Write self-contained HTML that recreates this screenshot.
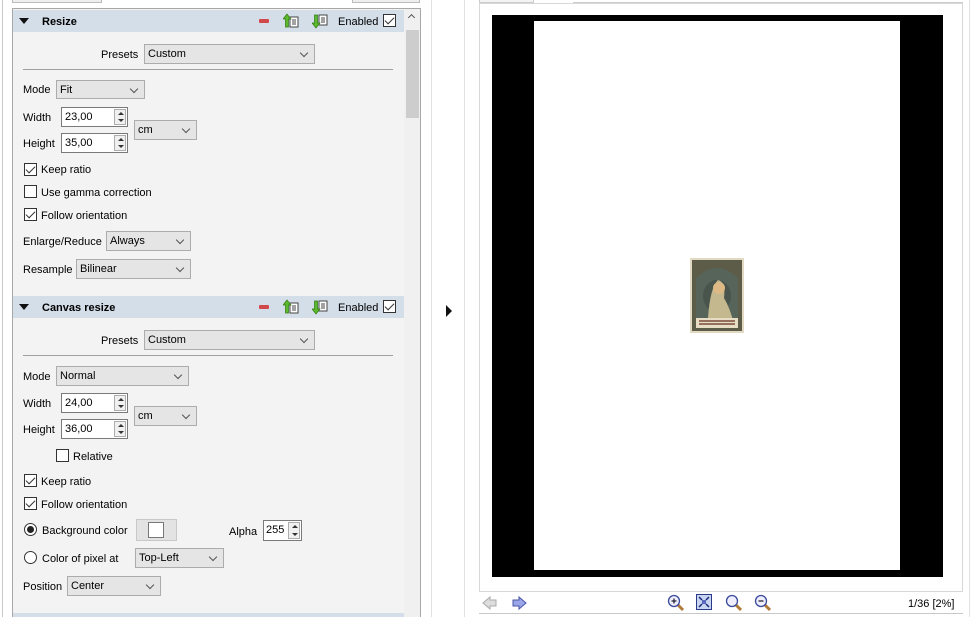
<!DOCTYPE html>
<html><head><meta charset="utf-8"><style>
*{box-sizing:border-box;margin:0;padding:0}
body{width:978px;height:617px;overflow:hidden;background:#fff;font-family:"Liberation Sans",sans-serif;font-size:11px;color:#000;position:relative}
.a{position:absolute}
.lbl{position:absolute;line-height:13px;white-space:nowrap;margin-top:1px}
.combo{position:absolute;background:#e5e5e5;border:1px solid #acacac;padding-left:3px;line-height:18px;white-space:nowrap}
.combo:after{content:"";position:absolute;right:7px;top:5px;width:5px;height:5px;border-right:1px solid #555;border-bottom:1px solid #555;transform:rotate(45deg)}
.spin{position:absolute;background:#fff;border:1px solid #7a7a7a;padding-left:3px;line-height:19px}
.spin i{position:absolute;right:1px;top:1px;bottom:1px;width:12px;border:1px solid #adadad;background:#f0f0f0}
.spin i:before{content:"";position:absolute;left:3px;top:2px;border:3px solid transparent;border-bottom:3px solid #333;border-top:0}
.spin i:after{content:"";position:absolute;left:3px;bottom:2px;border:3px solid transparent;border-top:3px solid #333;border-bottom:0}
.cb{position:absolute;width:13px;height:13px;border:1px solid #333;background:#fff}
.cb.on:after{content:"";position:absolute;left:3px;top:0px;width:4px;height:8px;border-right:1.3px solid #333;border-bottom:1.3px solid #333;transform:rotate(45deg)}
.rad{position:absolute;width:13px;height:13px;border:1px solid #333;border-radius:50%;background:#fff}
.rad.on:after{content:"";position:absolute;left:2px;top:2px;width:7px;height:7px;border-radius:50%;background:#222}
.hdr{position:absolute;left:13px;width:391px;height:22px;background:#d4dee9}
.hdr .tri{position:absolute;left:6px;top:8px;border:5px solid transparent;border-top:6px solid #111;border-bottom:0}
.hdr b{position:absolute;left:29px;top:6px;font-size:11px}
.hdr .en{position:absolute;left:325px;top:6px}
.hdr .minus{position:absolute;left:246px;top:9px;width:10px;height:4px;background:#d04848;border-radius:1px}
.sep{position:absolute;left:23px;width:370px;height:1px;background:#a0a0a0}
</style></head><body>
<div class="a" style="left:2px;top:0;width:1px;height:617px;background:#c8c8c8"></div>
<div class="a" style="left:12px;top:0;width:90px;height:3px;border:1px solid #bbb;border-top:0;background:#eee"></div>
<div class="a" style="left:352px;top:0;width:68px;height:3px;border:1px solid #bbb;border-top:0;background:#eee"></div>
<div class="a" style="left:12px;top:8px;width:409px;height:609px;border:1px solid #a8a8a8;background:#f3f3f3"></div>
<div class="a" style="left:404px;top:9px;width:16px;height:608px;background:#f0f0f0"></div>
<div class="a" style="left:406px;top:30px;width:13px;height:88px;background:#cdcdcd"></div>
<div class="a" style="left:409px;top:15px;width:5px;height:5px;border-left:1px solid #555;border-top:1px solid #555;transform:rotate(45deg)"></div>

<div class="hdr" style="top:10px"><span class="tri"></span><b>Resize</b><span class="minus"></span>
<svg class="a" style="left:270px;top:3px" width="16" height="16"><rect x="7" y="4" width="8" height="10" fill="#fff" stroke="#444"/><path d="M9 7h4M9 9h4M9 11h4" stroke="#444"/><path d="M4 1L0 6h2.5v8h3V6H8z" fill="#5cb82c" stroke="#2e7a10" stroke-width=".7"/></svg>
<svg class="a" style="left:299px;top:3px" width="16" height="16"><rect x="7" y="2" width="8" height="10" fill="#fff" stroke="#444"/><path d="M9 5h4M9 7h4M9 9h4" stroke="#444"/><path d="M4 15L0 10h2.5V2h3v8H8z" fill="#5cb82c" stroke="#2e7a10" stroke-width=".7"/></svg>
<span class="en">Enabled</span></div>
<div class="cb on" style="left:383px;top:14px"></div>

<div class="lbl" style="left:101px;top:48px">Presets</div>
<div class="combo" style="left:144px;top:44px;width:171px;height:20px">Custom</div>
<div class="sep" style="top:69px"></div>
<div class="lbl" style="left:23px;top:83px">Mode</div>
<div class="combo" style="left:56px;top:80px;width:89px;height:19px">Fit</div>
<div class="lbl" style="left:23px;top:111px">Width</div>
<div class="spin" style="left:61px;top:107px;width:67px;height:20px">23,00<i></i></div>
<div class="lbl" style="left:23px;top:137px">Height</div>
<div class="spin" style="left:61px;top:133px;width:67px;height:20px">35,00<i></i></div>
<div class="combo" style="left:134px;top:120px;width:63px;height:20px">cm</div>
<div class="cb on" style="left:24px;top:163px"></div><div class="lbl" style="left:41px;top:163px">Keep ratio</div>
<div class="cb" style="left:24px;top:185px"></div><div class="lbl" style="left:41px;top:186px">Use gamma correction</div>
<div class="cb on" style="left:24px;top:208px"></div><div class="lbl" style="left:41px;top:209px">Follow orientation</div>
<div class="lbl" style="left:23px;top:235px">Enlarge/Reduce</div>
<div class="combo" style="left:106px;top:231px;width:85px;height:20px">Always</div>
<div class="lbl" style="left:23px;top:263px">Resample</div>
<div class="combo" style="left:76px;top:259px;width:115px;height:20px">Bilinear</div>

<div class="hdr" style="top:296px"><span class="tri"></span><b>Canvas resize</b><span class="minus"></span>
<svg class="a" style="left:270px;top:3px" width="16" height="16"><rect x="7" y="4" width="8" height="10" fill="#fff" stroke="#444"/><path d="M9 7h4M9 9h4M9 11h4" stroke="#444"/><path d="M4 1L0 6h2.5v8h3V6H8z" fill="#5cb82c" stroke="#2e7a10" stroke-width=".7"/></svg>
<svg class="a" style="left:299px;top:3px" width="16" height="16"><rect x="7" y="2" width="8" height="10" fill="#fff" stroke="#444"/><path d="M9 5h4M9 7h4M9 9h4" stroke="#444"/><path d="M4 15L0 10h2.5V2h3v8H8z" fill="#5cb82c" stroke="#2e7a10" stroke-width=".7"/></svg>
<span class="en">Enabled</span></div>
<div class="cb on" style="left:383px;top:300px"></div>

<div class="lbl" style="left:101px;top:334px">Presets</div>
<div class="combo" style="left:144px;top:330px;width:171px;height:20px">Custom</div>
<div class="sep" style="top:355px"></div>
<div class="lbl" style="left:23px;top:370px">Mode</div>
<div class="combo" style="left:56px;top:366px;width:133px;height:20px">Normal</div>
<div class="lbl" style="left:23px;top:397px">Width</div>
<div class="spin" style="left:61px;top:393px;width:67px;height:20px">24,00<i></i></div>
<div class="lbl" style="left:23px;top:423px">Height</div>
<div class="spin" style="left:61px;top:419px;width:67px;height:20px">36,00<i></i></div>
<div class="combo" style="left:134px;top:406px;width:63px;height:20px">cm</div>
<div class="cb" style="left:56px;top:449px"></div><div class="lbl" style="left:73px;top:450px">Relative</div>
<div class="cb on" style="left:24px;top:474px"></div><div class="lbl" style="left:41px;top:475px">Keep ratio</div>
<div class="cb on" style="left:24px;top:497px"></div><div class="lbl" style="left:41px;top:498px">Follow orientation</div>
<div class="rad on" style="left:24px;top:523px"></div><div class="lbl" style="left:42px;top:524px">Background color</div>
<div class="a" style="left:136px;top:519px;width:41px;height:22px;background:#e3e3e3;border:1px solid #c8c8c8"></div>
<div class="a" style="left:148px;top:522px;width:16px;height:16px;background:#fff;border:1px solid #777"></div>
<div class="lbl" style="left:229px;top:525px">Alpha</div>
<div class="spin" style="left:263px;top:520px;width:39px;height:21px;padding-left:2px">255<i></i></div>
<div class="rad" style="left:24px;top:551px"></div><div class="lbl" style="left:42px;top:552px">Color of pixel at</div>
<div class="combo" style="left:135px;top:548px;width:89px;height:20px">Top-Left</div>
<div class="lbl" style="left:23px;top:580px">Position</div>
<div class="combo" style="left:67px;top:576px;width:94px;height:20px">Center</div>
<div class="a" style="left:13px;top:613px;width:391px;height:4px;background:#d4dee9"></div>

<div class="a" style="left:431px;top:0;width:1px;height:617px;background:#e2e2e2"></div>
<div class="a" style="left:464px;top:0;width:1px;height:617px;background:#e2e2e2"></div>
<div class="a" style="left:446px;top:305px;border:6px solid transparent;border-left:6px solid #111;border-right:0"></div>

<div class="a" style="left:479px;top:0;width:55px;height:3px;border:1px solid #ccc;border-top:0;background:#f3f3f3"></div>
<div class="a" style="left:573px;top:2px;width:390px;height:1px;background:#ccc"></div>
<div class="a" style="left:479px;top:3px;width:484px;height:589px;border:1px solid #d8d8d8;background:#fff"></div>
<div class="a" style="left:492px;top:15px;width:451px;height:562px;background:#000"></div>
<div class="a" style="left:534px;top:21px;width:366px;height:549px;background:#fff"></div>
<svg class="a" style="left:690px;top:258px" width="54" height="75"><rect width="54" height="75" fill="#e2d9c2"/><rect x="2" y="2" width="50" height="71" fill="#5c5c48"/><path d="M6 70V20Q27 0 48 20V70z" fill="#56645a"/><ellipse cx="27" cy="38" rx="14" ry="16" fill="#48544c"/><path d="M18 60Q20 30 28 22Q36 24 34 40Q40 50 44 66H14z" fill="#c4b98e"/><circle cx="29" cy="30" r="6" fill="#dcb985"/><rect x="6" y="60" width="42" height="10" fill="#e6ddc4"/><path d="M9 63h36M9 66h36" stroke="#7a4b3a" stroke-width="1.5"/></svg>
<div class="a" style="left:479px;top:613px;width:484px;height:1px;background:#c8c8c8"></div>
<svg class="a" style="left:482px;top:595px" width="16" height="16"><path d="M1 8L8 2v3h6v6H8v3z" fill="#ddd" stroke="#aaa"/></svg>
<svg class="a" style="left:511px;top:595px" width="16" height="16"><path d="M15 8L8 2v3H2v6h6v3z" fill="#9aa6e8" stroke="#4a56a8"/></svg>
<svg class="a" style="left:667px;top:594px" width="18" height="18"><line x1="10" y1="10" x2="16" y2="16" stroke="#b07a3a" stroke-width="3"/><circle cx="7" cy="7" r="5.5" fill="#eef" stroke="#3a4a9a" stroke-width="1.3"/><path d="M4.5 7h5M7 4.5v5" stroke="#223" stroke-width="1.3"/></svg>
<svg class="a" style="left:696px;top:594px" width="17" height="17"><rect x=".5" y=".5" width="15" height="15" fill="#c8d4f0" stroke="#2a3a8a"/><path d="M3 3l3 3M13 3l-3 3M3 13l3-3M13 13l-3-3" stroke="#1a2a7a" stroke-width="1.5"/><rect x="6" y="6" width="4" height="4" fill="#5a6ac0"/></svg>
<svg class="a" style="left:725px;top:594px" width="18" height="18"><line x1="10" y1="10" x2="16" y2="16" stroke="#b07a3a" stroke-width="3"/><circle cx="7" cy="7" r="5.5" fill="#eef" stroke="#3a4a9a" stroke-width="1.3"/></svg>
<svg class="a" style="left:754px;top:594px" width="18" height="18"><line x1="10" y1="10" x2="16" y2="16" stroke="#b07a3a" stroke-width="3"/><circle cx="7" cy="7" r="5.5" fill="#eef" stroke="#3a4a9a" stroke-width="1.3"/><path d="M4.5 7h5" stroke="#223" stroke-width="1.3"/></svg>
<div class="lbl" style="left:908px;top:597px">1/36 [2%]</div>
<div class="a" style="left:969px;top:0;width:1px;height:617px;background:#e2e2e2"></div>
</body></html>
